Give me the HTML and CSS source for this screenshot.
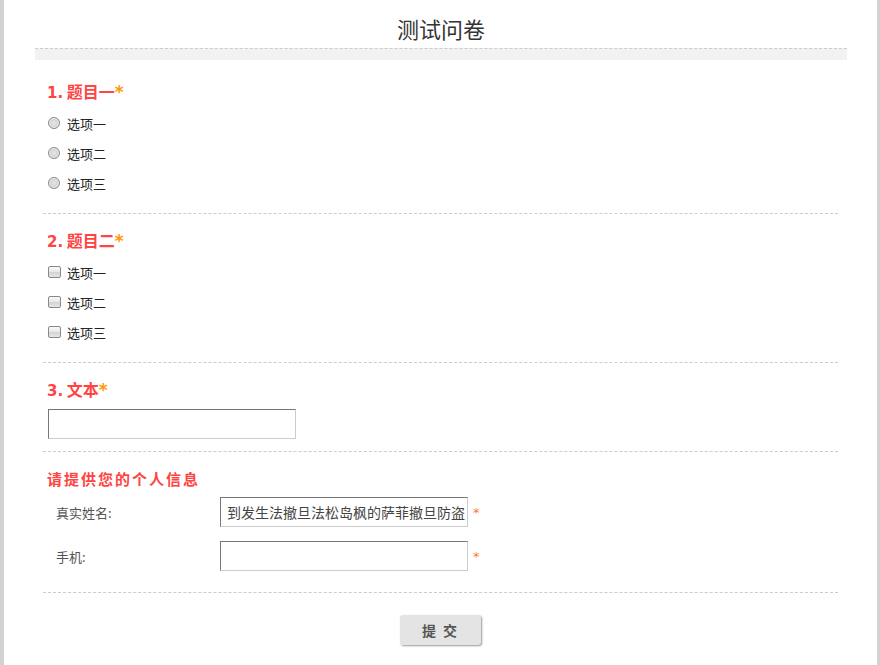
FILE: index.html
```html
<!DOCTYPE html>
<html lang="zh-CN">
<head>
<meta charset="utf-8">
<title>测试问卷</title>
<link rel="stylesheet" href="styles.css">
</head>
<body>
<div class="page">
  <h1 class="title">测试问卷</h1>
  <div class="band"></div>
  <form class="form">
    <div class="question first">
      <div class="q-title"><span class="num">1.</span> 题目一<span class="req">*</span></div>
      <label class="option"><span class="radio"></span>选项一</label>
      <label class="option"><span class="radio"></span>选项二</label>
      <label class="option"><span class="radio"></span>选项三</label>
    </div>
    <div class="question">
      <div class="q-title"><span class="num">2.</span> 题目二<span class="req">*</span></div>
      <label class="option"><span class="check"></span>选项一</label>
      <label class="option"><span class="check"></span>选项二</label>
      <label class="option"><span class="check"></span>选项三</label>
    </div>
    <div class="question text-q">
      <div class="q-title"><span class="num">3.</span> 文本<span class="req">*</span></div>
      <div class="text-input"></div>
    </div>
    <div class="question info">
      <div class="q-title info-title">请提供您的个人信息</div>
      <div class="info-row">
        <span class="info-label">真实姓名:</span>
        <div class="field">到发生法撤旦法松岛枫的萨菲撤旦防盗</div>
        <span class="star">*</span>
      </div>
      <div class="info-row">
        <span class="info-label">手机:</span>
        <div class="field"></div>
        <span class="star">*</span>
      </div>
    </div>
    <div class="actions">
      <div class="submit">提 交</div>
    </div>
  </form>
</div>
</body>
</html>
```
FILE: styles.css
```css
html {
  background: #d2d2d2;
}
body {
  margin: 0;
  font-family: "Noto Sans CJK SC", "DejaVu Sans", sans-serif;
  color: #333;
}
.page {
  margin: 0 3px 0 4px;
  background: #fff;
  min-height: 665px;
  padding: 0 30px 0 31px;
  box-sizing: border-box;
}
.title {
  margin: 0;
  padding-top: 14px;
  height: 34px;
  line-height: 28px;
  font-size: 22px;
  font-weight: normal;
  text-align: center;
  color: #333;
}
.band {
  height: 11px;
  border-top: 1px dashed #ccc;
  background: #f2f2f2;
}
.form {
  padding: 0 9px 0 8px;
}
.question {
  padding: 16px 0 15px;
  border-bottom: 1px dashed #ccc;
}
.question.first {
  padding-top: 21px;
}
.q-title {
  height: 20px;
  line-height: 20px;
  font-size: 16px;
  font-weight: bold;
  color: #f44;
  padding-left: 4px;
  margin-bottom: 7px;
}
.num {
  font-family: "DejaVu Sans", sans-serif;
  font-size: 15px;
}
.req {
  color: #f90;
  font-family: "DejaVu Sans", sans-serif;
  font-weight: bold;
  font-size: 17px;
}
.option {
  display: flex;
  align-items: center;
  height: 30px;
  font-size: 13px;
  color: #222;
  padding-left: 5px;
}
.radio {
  width: 10px;
  height: 10px;
  border: 1px solid #888;
  border-radius: 50%;
  background: radial-gradient(circle at 50% 50%, #e8e8e8 0, #d0d0d0 60%, #bbb 100%);
  margin-right: 7px;
  box-shadow: inset 0 0 0 1px #f6f6f6;
}
.check {
  width: 11px;
  height: 10px;
  border: 1px solid #888;
  border-radius: 2px;
  background: linear-gradient(#fafafa 0, #e8e8e8 45%, #d4d4d4 55%, #e6e6e6 100%);
  margin-right: 6px;
}
.text-q {
  padding-bottom: 12px;
}
.text-q .q-title {
  margin-bottom: 10px;
}
.text-input {
  width: 246px;
  height: 28px;
  margin-left: 5px;
  border: 1px solid #ccc;
  border-top-color: #777;
  border-left-color: #777;
}
.info {
  padding-top: 17px;
  padding-bottom: 21px;
}
.info-title {
  font-size: 15px;
  letter-spacing: 2px;
  margin-bottom: 8px;
}
.info-row {
  display: flex;
  align-items: center;
  height: 30px;
  margin-bottom: 14px;
}
.info-row:last-child {
  margin-bottom: 0;
}
.info-label {
  width: 164px;
  padding-left: 13px;
  font-size: 13px;
  color: #555;
}
.field {
  width: 240px;
  height: 28px;
  line-height: 28px;
  padding: 0 0 0 6px;
  overflow: hidden;
  white-space: nowrap;
  font-size: 14px;
  color: #444;
  border: 1px solid #ccc;
  border-top-color: #777;
  border-left-color: #777;
}
.star {
  margin-left: 5px;
  color: #f73;
  font-size: 13px;
  font-family: "DejaVu Sans", sans-serif;
}
.actions {
  display: flex;
  justify-content: center;
  padding-top: 22px;
}
.submit {
  width: 81px;
  height: 30px;
  line-height: 30px;
  text-align: center;
  background: #e4e4e4;
  border-radius: 3px;
  box-shadow: 1px 1px 2px #999;
  font-size: 14px;
  font-weight: bold;
  color: #555;
  letter-spacing: 2px;
}
```
